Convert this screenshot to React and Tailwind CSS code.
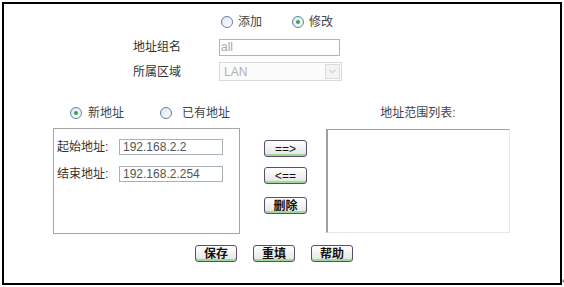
import React from 'react';

const Radio = ({ checked }) => (
  <span className="flex items-center justify-center w-[12px] h-[12px] rounded-full border border-[#5f7ea6] bg-gradient-to-br from-[#dfe6ef] to-white shrink-0">
    {checked && <span className="w-[4px] h-[4px] rounded-full bg-[#2fae3c]" />}
  </span>
);

const Btn = ({ children, className = '' }) => (
  <button
    className={`flex items-center justify-center h-[17px] rounded-[3px] border border-[#5a4d6e] bg-gradient-to-b from-white to-[#e4e4e4] shadow-[inset_0_-2px_0_#9fd99a] text-[12px] leading-none text-[#111] ${className}`}
  >
    {children}
  </button>
);

const App = () => {
  return (
    <div className="flex items-start w-[564px] h-[287px] bg-white pt-[2px] pl-[2px] font-['Liberation_Sans','Noto_Sans_CJK_SC',sans-serif] text-[12px]">
      <div className="w-[560px] h-[283px] border-2 border-black flex flex-col shrink-0">
        {/* 操作选择 */}
        <div className="flex items-center h-[12px] mt-[12px] pl-[217px] text-[#444]">
          <Radio />
          <span className="ml-[5px]">添加</span>
          <span className="ml-[30px]"><Radio checked /></span>
          <span className="ml-[5px]">修改</span>
        </div>

        {/* 地址组名 */}
        <div className="flex items-center mt-[10px] pl-[129px]">
          <span className="w-[86px] text-[#333]">地址组名</span>
          <div className="w-[121px] h-[17px] border border-[#b4b4b4] bg-white flex items-center pl-[1px] text-[#a8a8a8]">all</div>
        </div>

        {/* 所属区域 */}
        <div className="flex items-center mt-[6px] pl-[129px]">
          <span className="w-[86px] text-[#333]">所属区域</span>
          <div className="w-[123px] h-[19px] border border-[#dadada] bg-[#fbfbfb] flex items-center justify-between pl-[4px] pr-[1px] text-[#b0b0b0]">
            <span>LAN</span>
            <span className="w-[15px] h-[15px] border border-[#dcdcdc] bg-[#f3f3f3] flex items-center justify-center">
              <svg width="7" height="5" viewBox="0 0 7 5">
                <path d="M0.5 0.8 L3.5 3.8 L6.5 0.8" fill="none" stroke="#b8b8b8" strokeWidth="1" />
              </svg>
            </span>
          </div>
        </div>

        {/* 地址类型 + 列表标题 */}
        <div className="flex items-center h-[14px] mt-[25px]">
          <div className="flex items-center pl-[66px] w-[322px] text-[#444]">
            <Radio checked />
            <span className="ml-[6px]">新地址</span>
            <span className="ml-[36px]"><Radio /></span>
            <span className="ml-[10px]">已有地址</span>
          </div>
          <span className="w-[184px] text-center text-[#444]">地址范围列表:</span>
        </div>

        {/* 主区域 */}
        <div className="flex items-start mt-[8px] pl-[49px]">
          <div className="w-[187px] h-[106px] border border-[#a6a6a6] pt-[9px] pl-[3px]">
            <div className="flex items-center">
              <span className="w-[62px] text-[#333]">起始地址:</span>
              <div className="w-[104px] h-[16px] border border-[#a9b0b8] flex items-center pl-[3px] text-[#555]">192.168.2.2</div>
            </div>
            <div className="flex items-center mt-[9px]">
              <span className="w-[62px] text-[#333]">结束地址:</span>
              <div className="w-[104px] h-[16px] border border-[#a9b0b8] flex items-center pl-[3px] text-[#555]">192.168.2.254</div>
            </div>
          </div>

          <div className="flex flex-col ml-[24px] mt-[12px]">
            <Btn className="w-[43px]">==&gt;</Btn>
            <Btn className="w-[43px] mt-[10px]">&lt;==</Btn>
            <Btn className="w-[43px] mt-[13px] font-bold">删除</Btn>
          </div>

          <div className="w-[184px] h-[104px] mt-[1px] ml-[19px] border border-[#9aa0a8] border-l-2 border-r-[#e8e8e8] border-b-[#e8e8e8] bg-white" />
        </div>

        {/* 底部按钮 */}
        <div className="flex items-center mt-[11px] pl-[191px] gap-[16px]">
          <Btn className="w-[42px] font-bold">保存</Btn>
          <Btn className="w-[42px] font-bold">重填</Btn>
          <Btn className="w-[42px] font-bold">帮助</Btn>
        </div>
      </div>
      <span className="self-end mb-[3px] w-0 h-0 border-y-[3px] border-y-transparent border-r-[3px] border-r-[#888]" />
    </div>
  );
};

export default App;
